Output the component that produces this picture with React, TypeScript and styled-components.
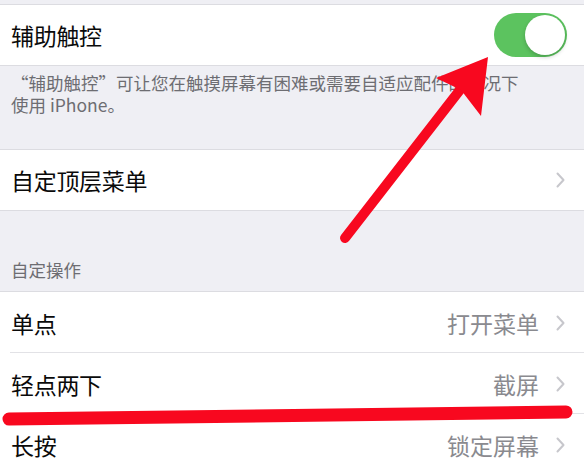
import React from "react";
import styled, { createGlobalStyle } from "styled-components";

const Global = createGlobalStyle`
  html, body { margin: 0; padding: 0; background: #efeff4; }
  body { font-family: "Noto Sans CJK SC", "Noto Sans", sans-serif; }
  * { box-sizing: border-box; }
`;

const Page = styled.div`
  position: relative;
  width: 584px;
  height: 475px;
  overflow: hidden;
  background: #efeff4;
  padding-top: 4px;
`;

const Group = styled.div`
  background: #ffffff;
  border-top: 1px solid #dcdce1;
  border-bottom: 1px solid #dcdce1;
`;

const Cell = styled.div<{ $h: number; $sep?: boolean }>`
  position: relative;
  display: flex;
  align-items: center;
  justify-content: space-between;
  height: ${(p) => p.$h}px;
  padding: 0 19px 0 11px;
  ${(p) =>
    p.$sep
      ? `&::after { content: ""; position: absolute; left: 10px; right: 0; bottom: 0; height: 1px; background: #e2e2e6; }`
      : ""}
`;

const Label = styled.span`
  font-size: 23px;
  color: #0a0a0a;
  letter-spacing: -0.3px;
`;

const Right = styled.div`
  display: flex;
  align-items: center;
  gap: 17px;
`;

const Value = styled.span`
  font-size: 23px;
  color: #8a8a8f;
`;

const Footer = styled.div`
  height: 83px;
  padding: 6px 0 0 11px;
  width: 534px;
  font-size: 17.5px;
  line-height: 22px;
  color: #6d6d72;
`;

const Spacer = styled.div`
  height: 80px;
  display: flex;
  align-items: flex-end;
  padding: 0 11px 9px;
  font-size: 17.5px;
  color: #6d6d72;
`;

const Track = styled.div`
  position: relative;
  width: 73px;
  height: 44px;
  border-radius: 22px;
  background: #5cc35f;
`;

const Knob = styled.div`
  position: absolute;
  right: 2px;
  top: 2px;
  width: 40px;
  height: 40px;
  border-radius: 50%;
  background: #ffffff;
  box-shadow: 0 2px 4px rgba(0, 0, 0, 0.2);
`;

const ToggleCell = styled(Cell)`
  padding-right: 17px;
`;

const Overlay = styled.svg`
  position: absolute;
  left: 0;
  top: 0;
  pointer-events: none;
`;

const Chevron = () => (
  <svg width="9" height="16" viewBox="0 0 9 16">
    <path d="M1.5 1.5 L7.5 8 L1.5 14.5" fill="none" stroke="#c7c7cc" strokeWidth="2" strokeLinecap="round" strokeLinejoin="round" />
  </svg>
);

const Toggle = () => (
  <Track>
    <Knob />
  </Track>
);

type Row = { label: string; value: string };
const actions: Row[] = [
  { label: "单点", value: "打开菜单" },
  { label: "轻点两下", value: "截屏" },
  { label: "长按", value: "锁定屏幕" },
];

export default function App() {
  return (
    <>
      <Global />
      <Page>
        <Group>
          <ToggleCell $h={60}>
            <Label>辅助触控</Label>
            <Toggle />
          </ToggleCell>
        </Group>
        <Footer>“辅助触控”可让您在触摸屏幕有困难或需要自适应配件的情况下使用 iPhone。</Footer>
        <Group>
          <Cell $h={60}>
            <Label>自定顶层菜单</Label>
            <Right>
              <Chevron />
            </Right>
          </Cell>
        </Group>
        <Spacer>自定操作</Spacer>
        <Group>
          {actions.map((a, i) => (
            <Cell key={a.label} $h={61} $sep={i < actions.length - 1}>
              <Label>{a.label}</Label>
              <Right>
                <Value>{a.value}</Value>
                <Chevron />
              </Right>
            </Cell>
          ))}
        </Group>
        <Overlay width="584" height="475" viewBox="0 0 584 475">
          <line x1="345" y1="238" x2="463" y2="86" stroke="#f8081f" strokeWidth="10" strokeLinecap="round" />
          <polygon points="488,57 436,78 461,90 481,116" fill="#f8081f" />
          <line x1="9" y1="419" x2="566" y2="412" stroke="#f8081f" strokeWidth="13" strokeLinecap="round" />
        </Overlay>
      </Page>
    </>
  );
}
